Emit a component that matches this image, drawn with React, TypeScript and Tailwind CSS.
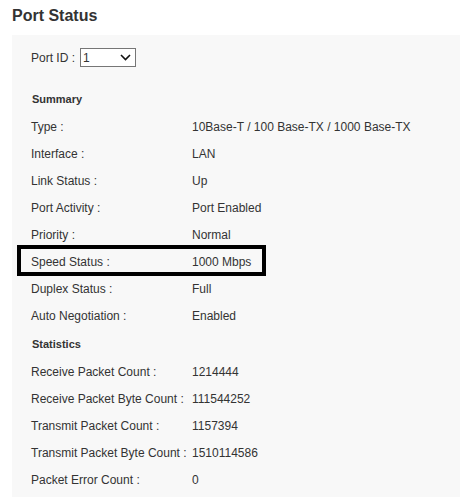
import { ReactElement } from "react";

type Row = { label: string; value: string; mark?: boolean };

const summary: Row[] = [
  { label: "Type :", value: "10Base-T / 100 Base-TX / 1000 Base-TX" },
  { label: "Interface :", value: "LAN" },
  { label: "Link Status :", value: "Up" },
  { label: "Port Activity :", value: "Port Enabled" },
  { label: "Priority :", value: "Normal" },
  { label: "Speed Status :", value: "1000 Mbps", mark: true },
  { label: "Duplex Status :", value: "Full" },
  { label: "Auto Negotiation :", value: "Enabled" },
];

const statistics: Row[] = [
  { label: "Receive Packet Count :", value: "1214444" },
  { label: "Receive Packet Byte Count :", value: "111544252" },
  { label: "Transmit Packet Count :", value: "1157394" },
  { label: "Transmit Packet Byte Count :", value: "1510114586" },
  { label: "Packet Error Count :", value: "0" },
];

function InfoRow({ row }: { row: Row }): ReactElement {
  return (
    <div className="relative flex h-[27px] items-center">
      <span className="w-[161px] shrink-0 whitespace-nowrap">{row.label}</span>
      <span className="whitespace-nowrap">{row.value}</span>
      {row.mark && (
        <div className="pointer-events-none absolute left-[-14px] top-[-3px] h-[31px] w-[249px] border-4 border-black" />
      )}
    </div>
  );
}

export default function App(): ReactElement {
  return (
    <div className="h-[497px] w-[460px] overflow-hidden bg-white font-['Liberation_Sans',Arial,sans-serif] text-[#333]">
      <h1 className="flex h-[35px] items-center pl-3 pb-[3px] text-[16px] font-bold">Port Status</h1>
      <div className="ml-3 h-[462px] bg-[#f8f8f8] pl-[19px] pt-[9px] text-[12px]">
        <div className="flex h-[27px] items-center gap-[5px]">
          <span>Port ID :</span>
          <div className="flex h-[19px] w-[56px] items-center justify-between border border-[#767676] bg-white pl-[2px] pr-[4px]">
            <span>1</span>
            <svg width="11" height="7" viewBox="0 0 11 7" fill="none" stroke="#111" strokeWidth="1.6">
              <path d="M1 1l4.5 4.5L10 1" />
            </svg>
          </div>
        </div>
        <div className="mt-[15px] flex h-[27px] items-center pl-px text-[11px] font-bold">Summary</div>
        {summary.map((r) => (
          <InfoRow key={r.label} row={r} />
        ))}
        <div className="mt-[2px] flex h-[27px] items-center pl-px text-[11px] font-bold">Statistics</div>
        {statistics.map((r) => (
          <InfoRow key={r.label} row={r} />
        ))}
      </div>
    </div>
  );
}
